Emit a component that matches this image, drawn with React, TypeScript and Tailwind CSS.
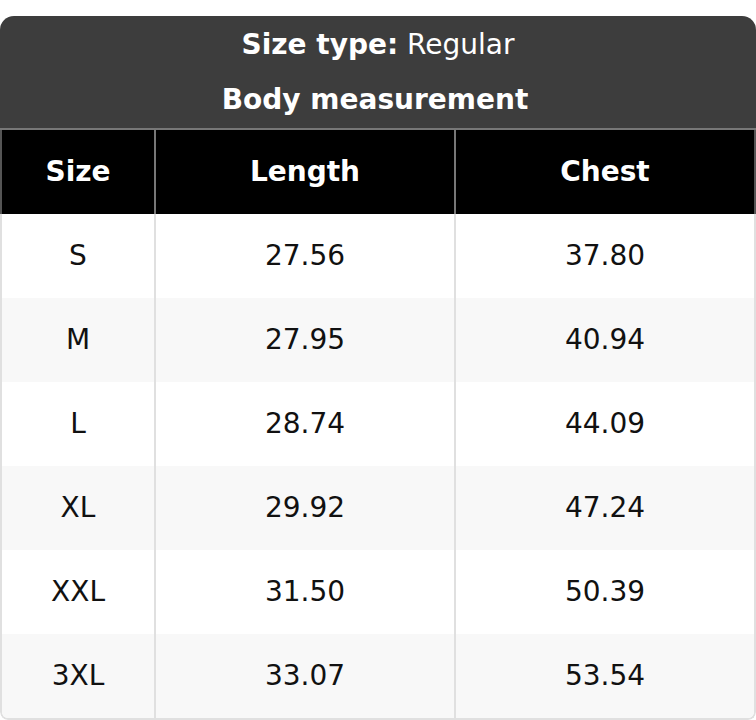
import React from "react";

const rows = [
  ["S", "27.56", "37.80"],
  ["M", "27.95", "40.94"],
  ["L", "28.74", "44.09"],
  ["XL", "29.92", "47.24"],
  ["XXL", "31.50", "50.39"],
  ["3XL", "33.07", "53.54"],
];

export default function App() {
  return (
    <div className="w-[756px] h-[720px] bg-white pt-4" style={{ fontFamily: '"DejaVu Sans", sans-serif' }}>
      <div className="w-[756px] overflow-hidden rounded-t-[14px] rounded-b-[8px]">
        <div className="bg-[#3d3d3d] text-white text-[28px] text-center h-[112px] flex flex-col">
          <div className="h-[56px] flex items-center justify-center pt-[2px]">
            <span className="font-bold">Size type:</span>
            <span>&nbsp;Regular</span>
          </div>
          <div className="h-[56px] flex items-center justify-center font-bold pr-[6px]">Body measurement</div>
        </div>
        <div className="h-[2px] bg-[#777]" />
        <div className="grid grid-cols-[154px_300px_1fr] bg-black text-white font-bold text-[28px] h-[84px] border-x-2 border-[#555]">
          <div className="flex items-center justify-center border-r-2 border-[#777]">Size</div>
          <div className="flex items-center justify-center border-r-2 border-[#777]">Length</div>
          <div className="flex items-center justify-center">Chest</div>
        </div>
        <div className="border-x-2 border-b-2 border-[#e0e0e0] rounded-b-[8px] overflow-hidden">
          {rows.map((r, i) => (
            <div
              key={r[0]}
              className={`grid grid-cols-[154px_300px_1fr] h-[84px] text-[28px] text-[#111] ${i % 2 === 1 ? "bg-[#f8f8f8]" : "bg-white"}`}
            >
              <div className="flex items-center justify-center border-r-2 border-[#e0e0e0]">{r[0]}</div>
              <div className="flex items-center justify-center border-r-2 border-[#e0e0e0]">{r[1]}</div>
              <div className="flex items-center justify-center">{r[2]}</div>
            </div>
          ))}
        </div>
      </div>
    </div>
  );
}
